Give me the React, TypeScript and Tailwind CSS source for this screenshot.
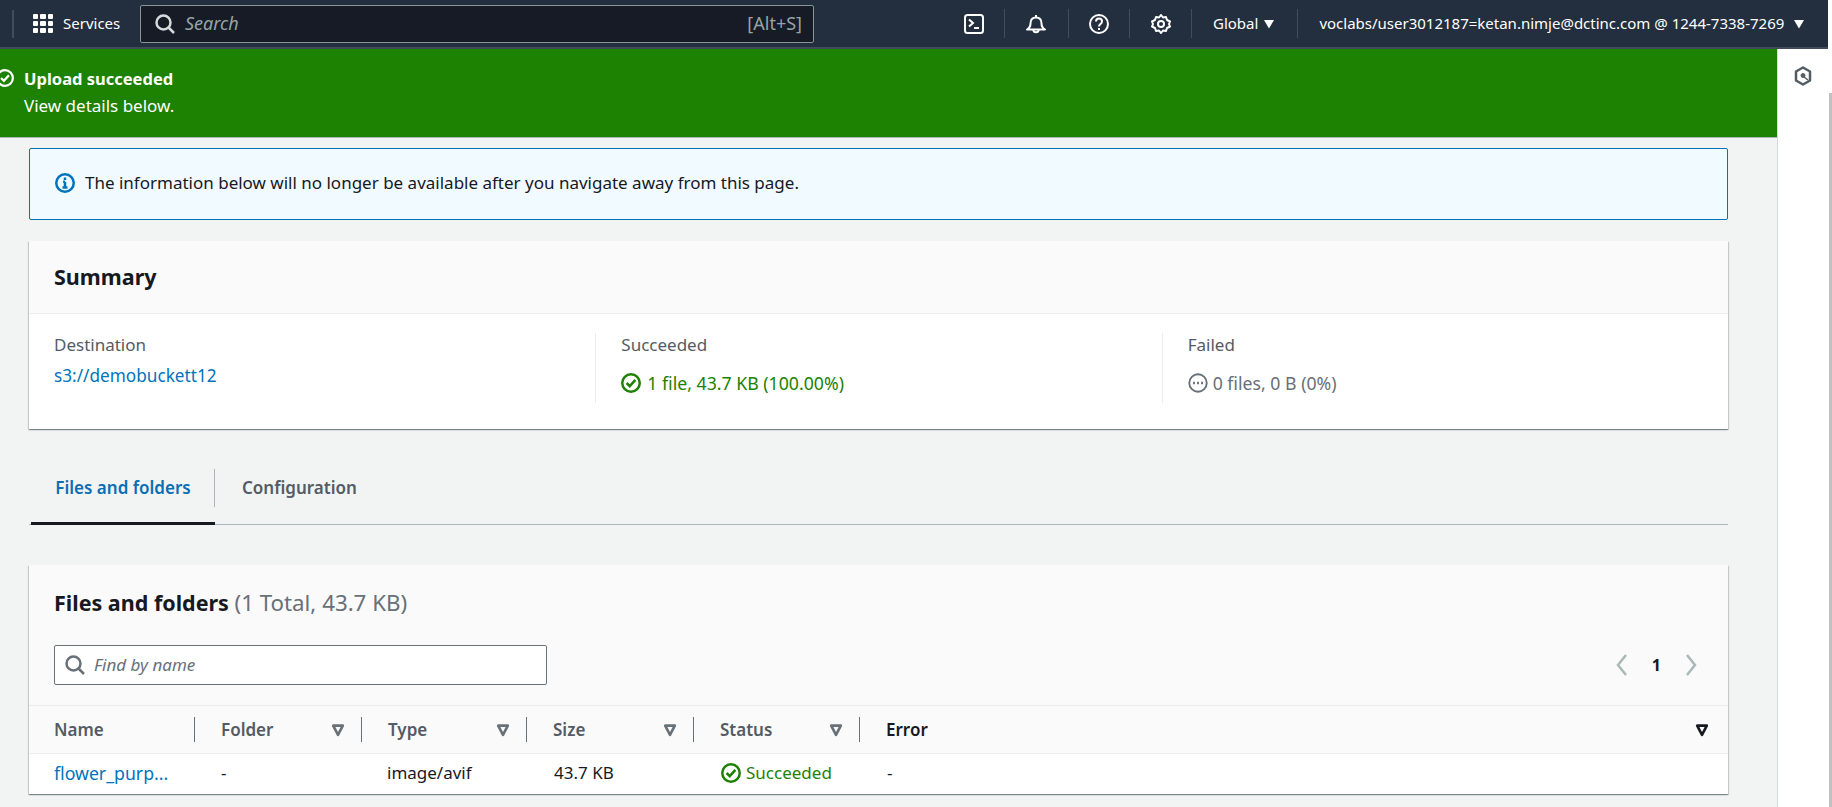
const font = { fontFamily: '"Noto Sans", sans-serif' };

function CheckCircle({ className }: { className: string }) {
  return (
    <svg viewBox="0 0 16 16" fill="none" stroke="currentColor" strokeWidth="2" className={className}>
      <circle cx="8" cy="8" r="7" />
      <path d="M4.5 8l2.5 2.5 4.5-5" />
    </svg>
  );
}

function Caret({ className }: { className: string }) {
  return (
    <svg viewBox="0 0 10 10" fill="currentColor" className={className}>
      <path d="M0 1h10L5 9.5z" />
    </svg>
  );
}

function FilterCaret({ className }: { className: string }) {
  return (
    <svg viewBox="0 0 16 16" fill="none" stroke="currentColor" strokeWidth="3" className={className}>
      <path d="M2.500 3h11L8 13.500z" strokeLinejoin="round" />
    </svg>
  );
}

function SearchIcon({ className }: { className: string }) {
  return (
    <svg viewBox="0 0 20 20" fill="none" stroke="currentColor" strokeWidth="2.500" className={className}>
      <circle cx="8.500" cy="8.500" r="7" />
      <path d="M13.500 13.500L19 19" />
    </svg>
  );
}

function NavDivider() {
  return <div className="w-px h-[29px] bg-[#414d5c]" />;
}

function NavIcons() {
  return (
    <div className="flex items-center">
      <div className="w-[60px] flex justify-center">
        <svg viewBox="0 0 20 20" fill="none" stroke="white" strokeWidth="2" className="w-5 h-5">
          <rect x="1" y="1" width="18" height="18" rx="2.5" />
          <path d="M5 5.5L9 9l-4 3.5M10 14h5" />
        </svg>
      </div>
      <NavDivider />
      <div className="w-[62px] flex justify-center">
        <svg viewBox="0 0 20 20" fill="none" stroke="white" strokeWidth="2" className="w-5 h-5">
          <path d="M1 15.500c2.500-1.500 3.500-3 3.500-6C4.500 6 6.500 3.500 10 3.500S15.500 6 15.500 9.500c0 3 1 4.500 3.500 6z" strokeLinejoin="round" />
          <path d="M10 1v2M7.500 16c0 3 5 3 5 0" />
        </svg>
      </div>
      <div className="w-px" />
      <NavDivider />
      <div className="w-[60px] flex justify-center">
        <svg viewBox="0 0 20 20" fill="none" stroke="white" strokeWidth="2" className="w-5 h-5">
          <circle cx="10" cy="10" r="9" />
          <path d="M7 7.500c0-4 6-4 6 0 0 2.500-3 2.500-3 5" />
          <path d="M10 14v2" />
        </svg>
      </div>
      <NavDivider />
      <div className="w-[61px] flex justify-center">
        <svg viewBox="0 0 20 20" fill="none" stroke="white" strokeWidth="2" className="w-5 h-5">
          <path d="M10 1l2 2.500 3-.5 1 3 3 1.500-1 2.500 1 2.500-3 1.500-1 3-3-.5-2 2.500-2-2.500-3 .5-1-3-3-1.500 1-2.500-1-2.500 3-1.500 1-3 3 .5z" strokeLinejoin="round" />
          <circle cx="10" cy="10" r="3" />
        </svg>
      </div>
      <NavDivider />
    </div>
  );
}

function TopNav() {
  const dots = Array.from({ length: 9 });
  return (
    <div className="h-[49px] shrink-0 bg-[#232f3e] border-b-2 border-[#424c58] flex items-center text-white pl-3">
      <div className="w-[2px] h-[28px] bg-[#414d5c]" />
      <div className="ml-[19px] grid grid-cols-3 gap-[2px] w-5 h-5">
        {dots.map((_, i) => (
          <div key={i} className="w-[5.33px] h-[5.33px] bg-white rounded-[1px]" />
        ))}
      </div>
      <span className="ml-[10px] text-[15px] w-[58px]">Services</span>
      <div className="ml-[19px] w-[674px] h-[38px] bg-[#161b26] border border-[#879596] rounded-[2px] flex items-center pl-[14px] pr-[11px]">
        <SearchIcon className="w-5 h-5 text-[#d5dbdb]" />
        <span className="ml-[10px] italic text-[18px] text-[#95a5a6]">Search</span>
        <span className="ml-auto text-[18px] text-[#95a5a6]">[Alt+S]</span>
      </div>
      <div className="ml-[130px]">
        <NavIcons />
      </div>
      <span className="ml-[21px] text-[15px]">Global</span>
      <Caret className="ml-[6px] w-[10px] h-[10px]" />
      <div className="ml-[23px]">
        <NavDivider />
      </div>
      <span className="ml-[21px] text-[15px] whitespace-nowrap">voclabs/user3012187=ketan.nimje@dctinc.com @ 1244-7338-7269</span>
      <Caret className="ml-[10px] w-[10px] h-[10px]" />
    </div>
  );
}

function Banner() {
  return (
    <div className="h-[89px] shrink-0 bg-[#1d8102] border-b border-[#aab7b8] text-white flex items-start pt-[16px]">
      <CheckCircle className="w-[18px] h-[18px] -ml-1 mt-[4px] shrink-0" />
      <div className="ml-[10px] leading-[27px]">
        <div className="text-[16.5px] font-bold">Upload succeeded</div>
        <div className="text-[17px]">View details below.</div>
      </div>
    </div>
  );
}

function Summary() {
  return (
    <div className="bg-white mt-[21px] h-[188px] shadow-[0_1px_1px_0_rgba(0,28,36,0.3),1px_1px_1px_0_rgba(0,28,36,0.15),-1px_1px_1px_0_rgba(0,28,36,0.15)]">
      <div className="h-[73px] bg-[#fafafa] border-b border-[#eaeded] flex items-center pl-[25px]">
        <h2 className="text-[21.5px] font-bold text-[#16191f]">Summary</h2>
      </div>
      <div className="grid grid-cols-3 pt-[19px]">
        <div className="pl-[25px] h-[70px]">
          <div className="text-[17px] text-[#545b64] leading-[24px]">Destination</div>
          <div className="text-[17.2px] text-[#0073bb] leading-[24px] mt-[7px]">s3://demobuckett12</div>
        </div>
        <div className="pl-[25px] h-[70px] border-l border-[#eaeded]">
          <div className="text-[17px] text-[#545b64] leading-[24px]">Succeeded</div>
          <div className="text-[17.7px] text-[#1d8102] leading-[24px] mt-[14px] flex items-center gap-[6px]">
            <CheckCircle className="w-5 h-5" />
            1 file, 43.7 KB (100.00%)
          </div>
        </div>
        <div className="pl-[25px] h-[70px] border-l border-[#eaeded]">
          <div className="text-[17px] text-[#545b64] leading-[24px]">Failed</div>
          <div className="text-[17.7px] text-[#687078] leading-[24px] mt-[14px] flex items-center gap-[5px]">
            <svg viewBox="0 0 16 16" fill="none" stroke="currentColor" strokeWidth="1.500" className="w-5 h-5">
              <circle cx="8" cy="8" r="7" />
              <path d="M4 8h1.500M7.250 8h1.500M10.500 8H12" strokeWidth="2" />
            </svg>
            0 files, 0 B (0%)
          </div>
        </div>
      </div>
    </div>
  );
}

function Tabs() {
  return (
    <div className="mt-[34px] h-[62px] border-b border-[#aab7b8] flex items-start text-[17px] font-semibold">
      <div className="ml-[2px] w-[184px] h-[62px] flex items-start justify-center pt-[12px] text-[#0a6eb5] border-b-[3px] border-[#16191f]">
        <span>Files and folders</span>
      </div>
      <div className="w-px h-[38px] mt-[6px] bg-[#aab7b8] -ml-px" />
      <span className="ml-[27px] mt-[12px] text-[#545b64]">Configuration</span>
    </div>
  );
}

const columns = [
  { name: "Name", width: "w-[141px]", filter: false },
  { name: "Folder", width: "w-[141px]", filter: true },
  { name: "Type", width: "w-[139px]", filter: true },
  { name: "Size", width: "w-[141px]", filter: true },
  { name: "Status", width: "w-[140px]", filter: true },
];

function FilesTable() {
  return (
    <div className="bg-white mt-[40px] h-[229px] shadow-[0_1px_1px_0_rgba(0,28,36,0.3),1px_1px_1px_0_rgba(0,28,36,0.15),-1px_1px_1px_0_rgba(0,28,36,0.15)]">
      <div className="h-[141px] bg-[#fafafa] border-b border-[#eaeded] px-[25px] pt-[24px]">
        <h2 className="text-[21.5px] leading-[28px] font-bold text-[#16191f]">
          Files and folders <span className="text-[22.3px] font-normal text-[#687078]">(1 Total, 43.7 KB)</span>
        </h2>
        <div className="flex items-center mt-[28px]">
          <div className="w-[493px] h-[40px] bg-white border border-[#687078] rounded-[2px] flex items-center pl-[10px]">
            <SearchIcon className="w-5 h-5 text-[#687078]" />
            <span className="ml-[9px] italic text-[17px] text-[#687078]">Find by name</span>
          </div>
          <div className="ml-auto flex items-center pr-[5px]">
            <svg viewBox="0 0 14 24" fill="none" stroke="#aab7b8" strokeWidth="2.500" className="w-[14px] h-[24px]">
              <path d="M11 2L3 12l8 10" />
            </svg>
            <span className="mx-[23px] text-[16px] font-bold text-[#16191f]">1</span>
            <svg viewBox="0 0 14 24" fill="none" stroke="#aab7b8" strokeWidth="2.500" className="w-[14px] h-[24px]">
              <path d="M3 2l8 10-8 10" />
            </svg>
          </div>
        </div>
      </div>
      <div className="h-[48px] bg-[#fafafa] border-b border-[#eaeded] flex items-center text-[17px] font-semibold text-[#545b64] pl-[25px] pr-[19px]">
        {columns.map((c) => (
          <div key={c.name} className={`${c.width} h-[25px] flex items-center border-r border-[#687078] pr-[16px] mr-[26px]`}>
            <span>{c.name}</span>
            {c.filter && <FilterCaret className="ml-auto w-[14px] h-[14px] text-[#687078]" />}
          </div>
        ))}
        <span className="text-[#16191f]">Error</span>
        <FilterCaret className="ml-auto w-[14px] h-[14px] text-[#16191f]" />
      </div>
      <div className="h-[40px] pb-[2px] flex items-center text-[17px] text-[#16191f] pl-[25px]">
        <span className="w-[167px] text-[17.7px] text-[#0073bb]">flower_purp...</span>
        <span className="w-[166px]">-</span>
        <span className="w-[167px]">image/avif</span>
        <span className="w-[167px]">43.7 KB</span>
        <span className="w-[166px] flex items-center gap-[5px] text-[#1d8102]">
          <CheckCircle className="w-5 h-5" />
          Succeeded
        </span>
        <span>-</span>
      </div>
    </div>
  );
}

export default function App() {
  return (
    <div style={font} className="w-[1832px] h-[807px] overflow-hidden flex bg-white">
      <div className="w-[1828px] flex flex-col">
        <TopNav />
        <div className="flex flex-1 min-h-0">
          <div className="w-[1778px] flex flex-col bg-[#f2f3f3] border-r border-[#d5dbdb]">
            <Banner />
            <div className="pl-[29px] pr-[49px] pt-[10px]">
              <div className="h-[72px] bg-[#f1faff] border border-[#0073bb] rounded-[2px] flex items-center pl-[25px] pb-[2px] text-[17px] text-[#16191f]">
                <svg viewBox="0 0 16 16" fill="none" stroke="#0073bb" strokeWidth="2" className="w-5 h-5">
                  <circle cx="8" cy="8" r="7" />
                  <path d="M8 7v4.500M6 11.500h4M6.500 7H8M8 3.500v2" />
                </svg>
                <span className="ml-[10px]">The information below will no longer be available after you navigate away from this page.</span>
              </div>
              <Summary />
              <Tabs />
              <FilesTable />
            </div>
          </div>
          <div className="flex-1 bg-white flex justify-center pt-[17px]">
            <svg viewBox="0 0 18 20" fill="none" stroke="#545b64" strokeWidth="2.500" className="w-[18px] h-[20px]">
              <path d="M9 1.500l7 4v9l-7 4-7-4v-9z" strokeLinejoin="round" />
              <circle cx="9" cy="9.500" r="2" fill="#545b64" strokeWidth="1" />
              <path d="M10 11l4 3" strokeWidth="1.500" />
            </svg>
          </div>
        </div>
      </div>
      <div className="w-1 pt-[93px] flex justify-center">
        <div className="w-[3px] h-full bg-[#c1c1c1]" />
      </div>
    </div>
  );
}
